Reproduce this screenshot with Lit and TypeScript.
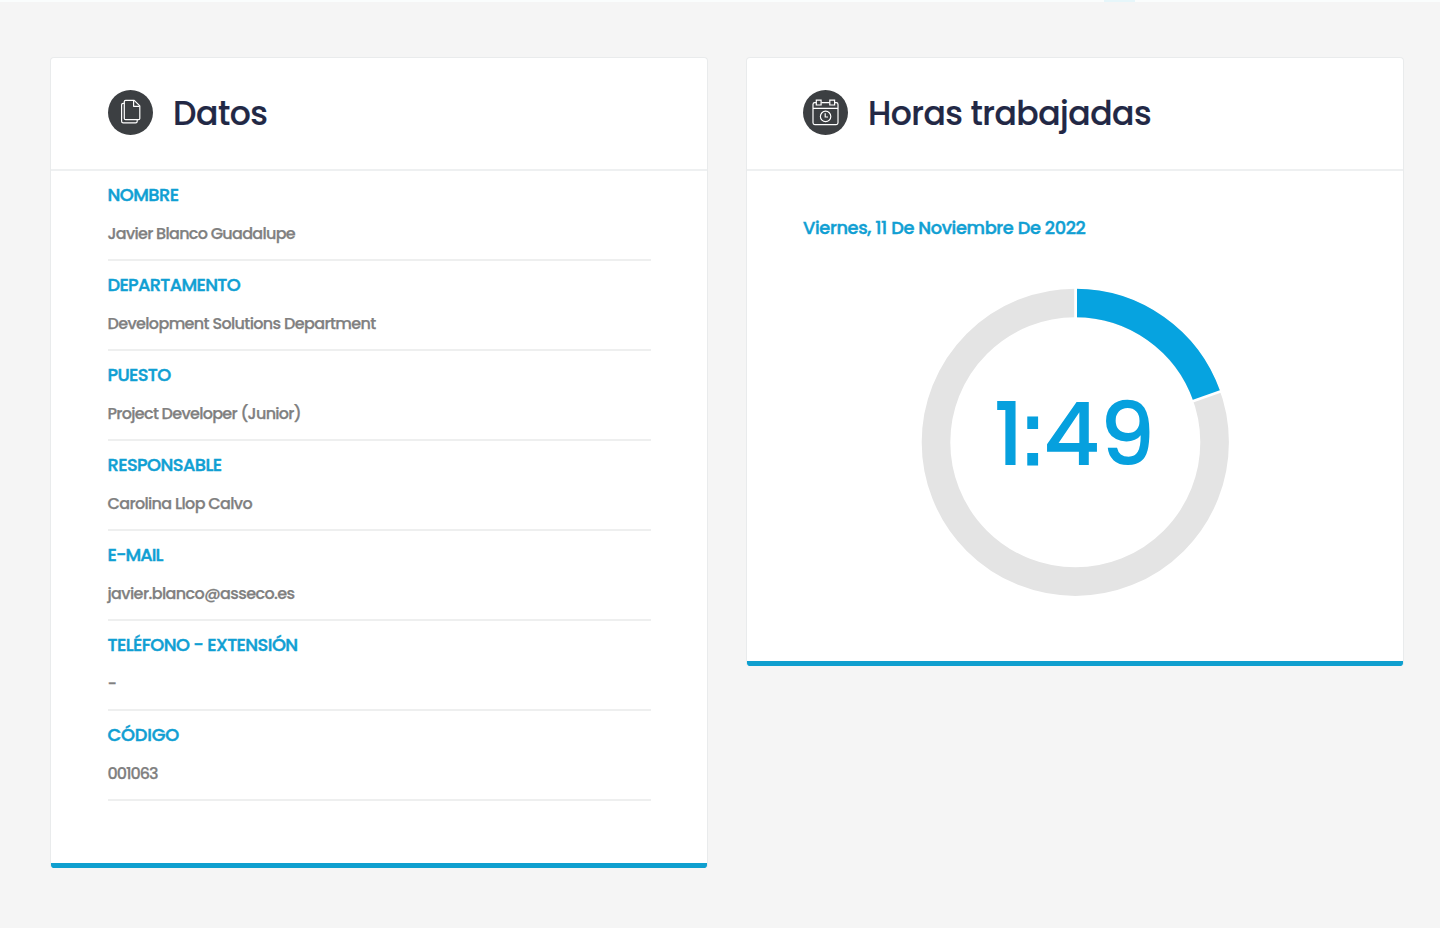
import { LitElement, html, css, nothing } from "lit";
import { customElement, property } from "lit/decorators.js";

interface Field {
  label: string;
  labelWidth: number;
  value: string;
  valueWidth: number;
}

const FIELDS: Field[] = [
  { label: "NOMBRE", labelWidth: 71, value: "Javier Blanco Guadalupe", valueWidth: 187.5 },
  { label: "DEPARTAMENTO", labelWidth: 132.5, value: "Development Solutions Department", valueWidth: 268 },
  { label: "PUESTO", labelWidth: 63, value: "Project Developer (Junior)", valueWidth: 193.5 },
  { label: "RESPONSABLE", labelWidth: 114, value: "Carolina Llop Calvo", valueWidth: 144.5 },
  { label: "E-MAIL", labelWidth: 55, value: "javier.blanco@asseco.es", valueWidth: 187 },
  { label: "TELÉFONO - EXTENSIÓN", labelWidth: 190, value: "-", valueWidth: 7 },
  { label: "CÓDIGO", labelWidth: 71.5, value: "001063", valueWidth: 50 },
];

/** Single line of text whose tracking is set so that it spans a given width. */
@customElement("tracked-text")
export class TrackedText extends LitElement {
  @property({ type: Number }) width = 0;
  @property() text = "";

  static styles = css`
    :host { display: inline-block; white-space: nowrap; }
    .line { display: inline-block; letter-spacing: 0; }
  `;

  updated() {
    const line = this.renderRoot.querySelector<HTMLElement>(".line")!;
    line.style.letterSpacing = "0px";
    const natural = line.getBoundingClientRect().width;
    line.style.letterSpacing = `${(this.width - natural) / this.text.length}px`;
  }

  render() {
    return html`<span class="line">${this.text}</span>`;
  }
}

/** White panel with an icon heading and a blue foot. */
@customElement("info-card")
export class InfoCard extends LitElement {
  @property() heading = "";
  @property({ type: Number }) headingWidth = 0;
  @property() icon = "";

  static styles = css`
    :host {
      --inset: 57px;
      display: flex;
      flex-direction: column;
      box-sizing: border-box;
      background: #fff;
      border: 1px solid #e9ebec;
      border-bottom: 0;
      border-radius: 4px 4px 3px 3px;
      overflow: hidden;
    }
    .head {
      display: flex;
      align-items: center;
      gap: 20px;
      height: 113px;
      padding: 0 56px 0 var(--inset);
      box-sizing: border-box;
      border-bottom: 2px solid #eef0f1;
    }
    .icon { width: 45px; height: 45px; flex: none; margin-bottom: 2px; }
    .title {
      margin: 0;
      font-size: 33px;
      line-height: 44px;
      font-weight: 500;
      color: #222845;
      -webkit-text-stroke: 0.2px currentColor;
    }
    .body { flex: 1; padding: 0 56px 0 var(--inset); }
    .foot { height: 5px; background: #0f9fcf; border-radius: 0 0 2px 2px; }
  `;

  private glyph() {
    return html`
      <svg class="icon" viewBox="0 0 45 45" fill="none" stroke="#fff" stroke-width="1.2">
        <circle cx="22.5" cy="22.5" r="22.5" fill="#3c3f42" stroke="none"></circle>
        ${this.icon === "files"
          ? html`<svg stroke-linejoin="round">
              <path d="M17.6 10.3h8.6l5.6 5.6v12.5q0 1.2-1.2 1.2H17.6q-1.3 0-1.3-1.2V11.5q0-1.2 1.3-1.2z"></path>
              <path d="M25.6 10.6v5.7h6"></path>
              <path d="M16.2 13.4h-1q-1.6 0-1.6 1.4v16.5q0 1.6 1.6 1.6h12.4q1.6 0 1.6-1.6v-1.5"></path>
            </svg>`
          : nothing}
        ${this.icon === "calendar"
          ? html`<svg>
              <path d="M13.3 12.6h-1.6q-1.7 0-1.7 1.8v18.4q0 1.8 1.8 1.8h21.4q1.8 0 1.8-1.8v-18.4q0-1.8-1.7-1.8h-1.6M18.4 12.6h8.2M10 18.4h25"></path>
              <path d="M13.3 10.2h4.8v4.8h-4.8zM26.8 10.2h4.8v4.8h-4.8z"></path>
              <circle cx="22.6" cy="26.4" r="5.2"></circle>
              <path d="M22.2 23.3v3.7h2.8"></path>
            </svg>`
          : nothing}
      </svg>
    `;
  }

  render() {
    return html`
      <div class="head">
        ${this.glyph()}
        <h2 class="title"><tracked-text .text=${this.heading} .width=${this.headingWidth}></tracked-text></h2>
      </div>
      <div class="body"><slot></slot></div>
      <div class="foot"></div>
    `;
  }
}

@customElement("app-root")
export class AppRoot extends LitElement {
  static styles = css`
    :host {
      display: block;
      box-sizing: border-box;
      height: 928px;
      overflow: hidden;
      background: #f5f5f5;
      font-family: Poppins, Inter, "Open Sans", sans-serif;
      font-feature-settings: "cv11";
      font-optical-sizing: none;
      font-kerning: normal;
    }
    .strip {
      height: 2px;
      background: linear-gradient(90deg, #fafdfd 1104px, #e6f6fa 1104px 1135px, #fafdfd 1135px);
    }
    .cards {
      display: grid;
      grid-template-columns: 658px 658px;
      gap: 38px;
      align-items: start;
      padding: 55px 0 0 50px;
    }
    .person { height: 811px; }
    .hours { height: 609px; --inset: 56px; }
    .field {
      box-sizing: border-box;
      height: 90px;
      padding-top: 12px;
      border-bottom: 2px solid #eeefef;
    }
    .label, .date {
      font-size: 17.8px;
      line-height: 24px;
      font-weight: 500;
      -webkit-text-stroke: 0.45px currentColor;
      color: #109fd3;
    }
    .label, .value { margin-left: -0.5px; }
    .value {
      margin-top: 16px;
      font-size: 16px;
      line-height: 22px;
      font-weight: 500;
      -webkit-text-stroke: 0.25px currentColor;
      color: #808080;
    }
    .date { padding-top: 45px; }
    .chart { display: grid; place-items: center; width: 308px; margin: 48px auto 0; }
    .chart > * { grid-area: 1 / 1; }
    .ring { width: 308px; height: 308px; display: block; }
    .time {
      display: flex;
      align-items: baseline;
      font-size: 88px;
      line-height: 100px;
      font-weight: 500;
      color: #06a0de;
      margin: 0 2px 16px 0;
    }
    .hour { letter-spacing: -7px; }
    .minutes { letter-spacing: -0.5px; }
    .colon {
      font: 400 93px/100px "DejaVu Sans", sans-serif;
      letter-spacing: -5.5px;
      -webkit-text-stroke: 1.2px currentColor;
    }
  `;

  render() {
    return html`
      <div class="strip"></div>
      <div class="cards">
        <info-card class="person" heading="Datos" .headingWidth=${94.5} icon="files">
          ${FIELDS.map(
            (f) => html`
              <div class="field">
                <div class="label"><tracked-text .text=${f.label} .width=${f.labelWidth}></tracked-text></div>
                <div class="value"><tracked-text .text=${f.value} .width=${f.valueWidth}></tracked-text></div>
              </div>
            `,
          )}
        </info-card>
        <info-card class="hours" heading="Horas trabajadas" .headingWidth=${283} icon="calendar">
          <div class="date">
            <tracked-text text="Viernes, 11 De Noviembre De 2022" .width=${282.5}></tracked-text>
          </div>
          <div class="chart">
            <svg class="ring" viewBox="-154.3 -154.3 308 308" fill="none">
              <circle r="139.3" stroke="#e4e4e4" stroke-width="28.6"></circle>
              <path d="M0 -139.3A139.3 139.3 0 0 1 131.4 -46.3" stroke="#06a3e0" stroke-width="28.6"></path>
              <path d="M.3 -155V-123M146.4 -51.3L116 -40.6" stroke="#fff" stroke-width="2.8"></path>
            </svg>
            <div class="time"><span class="hour">1</span><span class="colon">:</span><span class="minutes">49</span></div>
          </div>
        </info-card>
      </div>
    `;
  }
}
